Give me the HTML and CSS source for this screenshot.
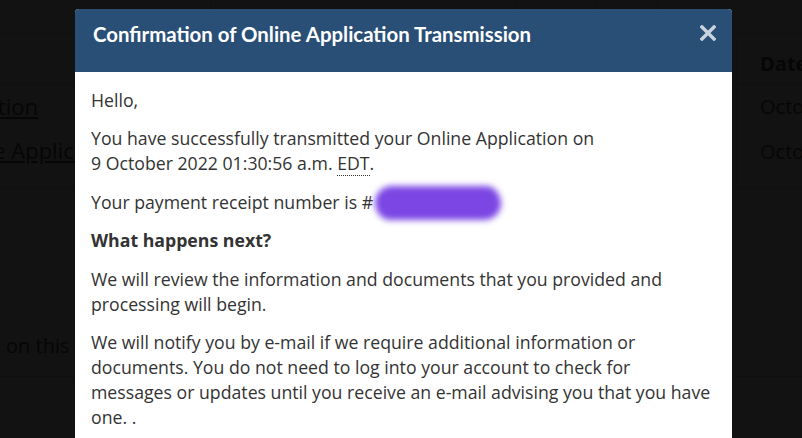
FILE: index.html
```html
<!DOCTYPE html>
<html lang="en">
<head>
<meta charset="utf-8">
<title>Confirmation</title>
<link rel="stylesheet" href="styles.css">
</head>
<body>
<div class="page">
  <div class="toprow">
    <div class="tcell w1"></div>
    <div class="tcell w2"></div>
    <div class="tcell w3"></div>
    <div class="tcell w4"></div>
    <div class="tcell w5"></div>
  </div>
  <div class="table">
    <div class="thead">
      <div class="col-left"></div>
      <div class="col-right"><b>Date</b></div>
    </div>
    <div class="tbody">
      <div class="col-left links">
        <a href="#" class="lnk l1">Confirmation</a>
        <a href="#" class="lnk l2">Online Application</a>
      </div>
      <div class="col-right dates">
        <div class="drow">October</div>
        <div class="drow">October</div>
      </div>
    </div>
  </div>
  <div class="note"><span class="note-text">Information on this page</span></div>
</div>

<div class="overlay">
  <div class="modal">
    <div class="modal-header">
      <h2 class="modal-title">Confirmation of Online Application Transmission</h2>
      <button class="close" aria-label="Close">
        <svg width="16" height="16" viewBox="0 0 16 16"><path d="M2 2L14 14M14 2L2 14" stroke="#c9d3de" stroke-width="3.4" stroke-linecap="square" fill="none"/></svg>
      </button>
    </div>
    <div class="modal-body">
      <p>Hello,</p>
      <p>You have successfully transmitted your Online Application on<br>9 October 2022 01:30:56 a.m. <abbr title="Eastern Daylight Time">EDT</abbr>.</p>
      <p>Your payment receipt number is #<span class="blob"></span></p>
      <p><strong>What happens next?</strong></p>
      <p>We will review the information and documents that you provided and processing will begin.</p>
      <p>We will notify you by e-mail if we require additional information or documents. You do not need to log into your account to check for messages or updates until you receive an e-mail advising you that you have one. .</p>
    </div>
  </div>
</div>
</body>
</html>
```
FILE: styles.css
```css
html, body {
  margin: 0;
  padding: 0;
  height: 100%;
  overflow: hidden;
}
body {
  font-family: "Open Sans", "Noto Sans", sans-serif;
  font-size: 17.7px;
  color: #333;
  background: #fff;
}
.page {
  height: 100%;
}
.toprow {
  display: flex;
  height: 34px;
  border-bottom: 1px solid #ccc;
  box-sizing: border-box;
}
.tcell {
  border-right: 1px solid #ccc;
  flex: none;
}
.w1 { width: 210px; }
.w2 { width: 305px; }
.w3 { width: 78px; }
.w4 { width: 61px; }
.w5 { flex: 1; border-right: none; }
.thead {
  display: flex;
  height: 51px;
  border-bottom: 1px solid #ccc;
  box-sizing: border-box;
}
.col-left {
  width: 737px;
  flex: none;
  border-right: 1px solid #ddd;
  box-sizing: border-box;
}
.col-right { flex: 1; padding-left: 23px; white-space: nowrap; overflow: hidden; }
.thead .col-right { padding-top: 16px; color: #555; font-size: 20px; }
.tbody {
  display: flex;
  height: 103px;
  border-bottom: 1px solid #ccc;
  box-sizing: border-box;
}
.links {
  display: flex;
  flex-direction: column;
  padding-top: 8px;
  gap: 17px;
}
.lnk {
  display: block;
  overflow: hidden;
  color: #555;
  font-size: 22px;
  line-height: 27px;
  white-space: nowrap;
}
.l1 { width: 38px; direction: rtl; text-align: left; }
.l2 { width: 75px; text-indent: -62px; }
.dates { color: #555; font-size: 20px; }
.drow {
  height: 45px;
  padding-top: 8px;
  box-sizing: border-box;
  border-bottom: 1px solid #ddd;
}
.note {
  margin-top: 144px;
  height: 45px;
  border-bottom: 1px solid #ccc;
  box-sizing: border-box;
}
.note-text {
  display: block;
  width: 75px;
  overflow: hidden;
  white-space: nowrap;
  font-size: 20px;
  color: #555;
  text-indent: -110px;
}

.overlay {
  position: fixed;
  inset: 0;
  background: rgba(0, 0, 0, 0.93);
}
.modal {
  width: 657px;
  margin: 9px 0 0 75px;
  background: #fff;
  border-radius: 4px 4px 0 0;
}
.modal-header {
  height: 63px;
  box-sizing: border-box;
  background: #294f77;
  border-radius: 4px 4px 0 0;
  padding: 13px 16px 0 18px;
  display: flex;
  justify-content: space-between;
  align-items: flex-start;
}
.modal-title {
  margin: 0;
  font-family: Lato, "Open Sans", sans-serif;
  font-weight: 700;
  font-size: 20.4px;
  line-height: 24px;
  color: #fff;
}
.close {
  background: none;
  border: none;
  padding: 0;
  margin-top: 3px;
  width: 16px;
  height: 16px;
  cursor: pointer;
}
.close svg { display: block; }
.modal-body {
  padding: 16px 18px 20px 16px;
  line-height: 25px;
}
.modal-body p {
  margin: 0 0 13.4px;
}
abbr {
  text-decoration: none;
  border-bottom: 1px dotted #333;
}
.blob {
  display: inline-block;
  width: 126px;
  height: 34px;
  margin: -8px 0 -8px 2px;
  vertical-align: -3px;
  background: #7b46e4;
  border-radius: 17px 15px 17px 15px / 16px 18px 16px 18px;
  filter: blur(3px);
}
```
